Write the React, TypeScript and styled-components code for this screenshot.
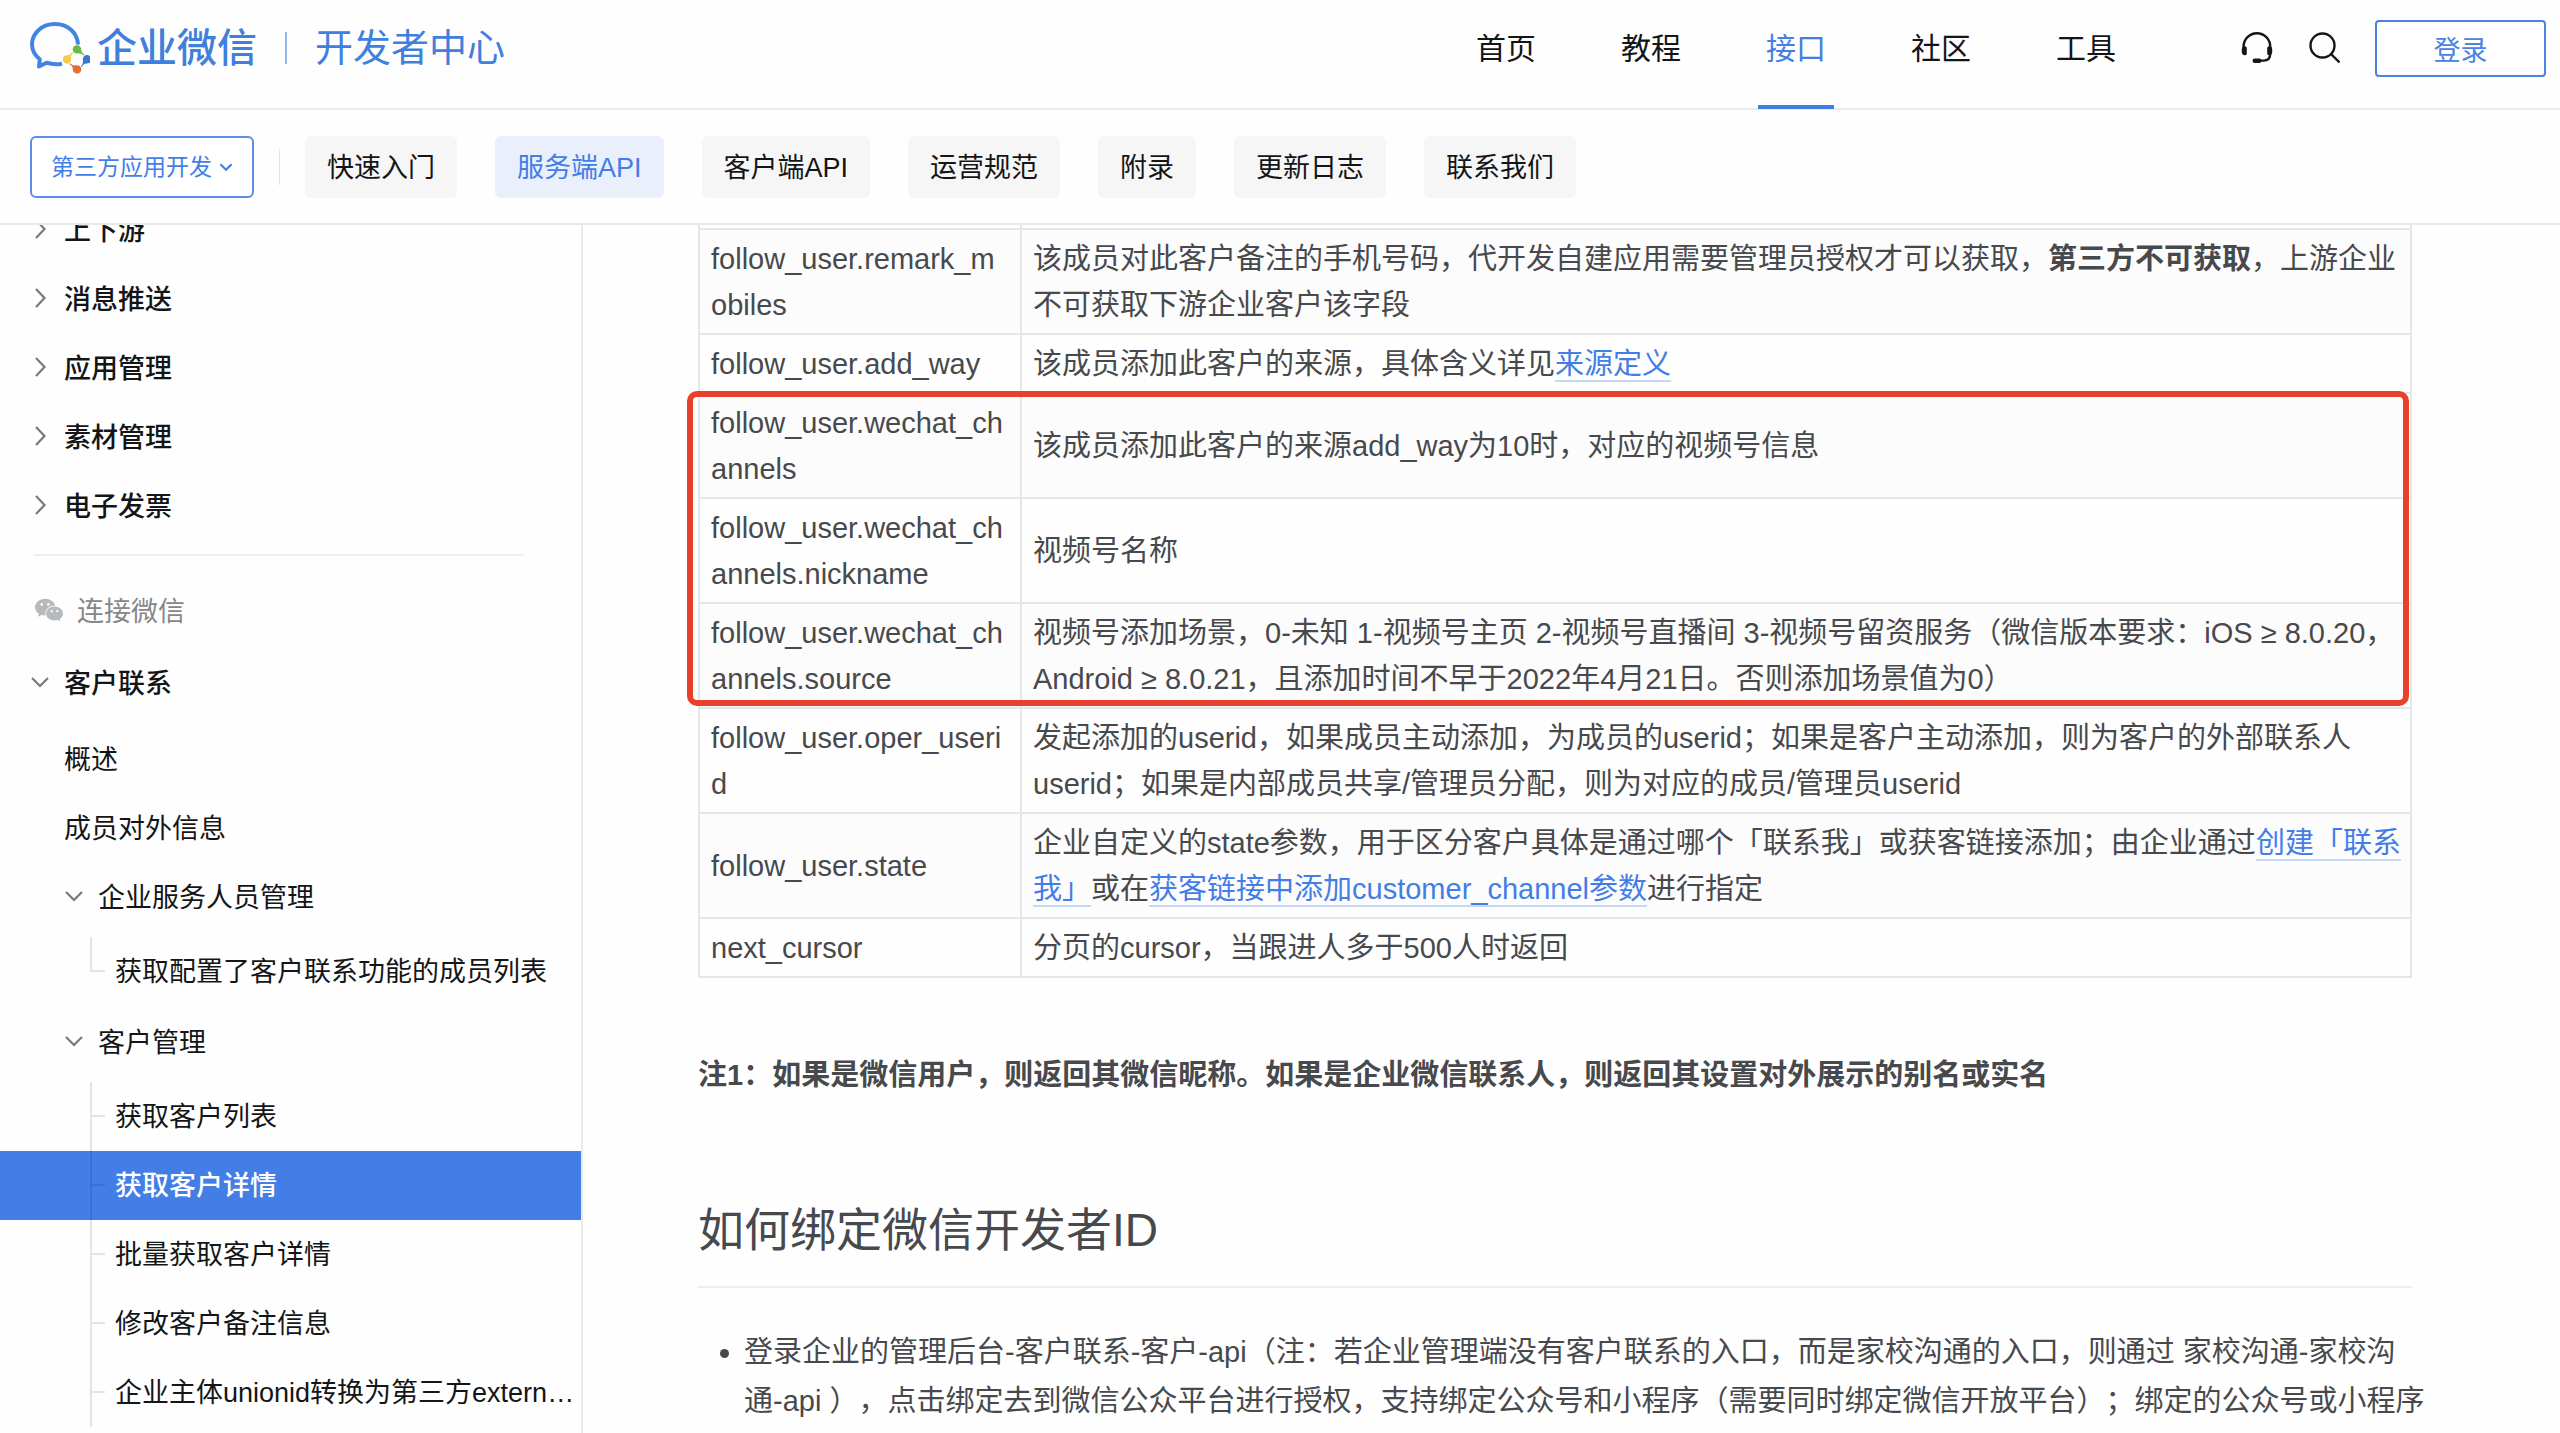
import React, { useState } from "react";
import styled, { createGlobalStyle, css } from "styled-components";
import { AiFillWechat } from "react-icons/ai";

const blue = "#437de6";

const GlobalStyle = createGlobalStyle`
  *, *::before, *::after { box-sizing: border-box; }
  body {
    margin: 0;
    background: #fefefe;
    color: #141516;
    font-family: "Liberation Sans", "Noto Sans CJK SC", sans-serif;
    font-size: 27px;
    text-spacing-trim: space-all;
  }
  button, select { font: inherit; color: inherit; }
  a { color: inherit; text-decoration: none; }
`;

const Page = styled.div`
  display: flex;
  flex-direction: column;
  height: 100vh;
  overflow: hidden;
`;

/* ---------- top bar ---------- */

const TopBar = styled.header`
  display: flex;
  align-items: center;
  flex: none;
  height: 110px;
  padding: 0 14px 12px 30px;
  border-bottom: 2px solid #ececec;
`;

const Brand = styled.a`
  display: flex;
  align-items: center;
  color: #3f80dd;
  line-height: 60px;
`;

const BrandMark = styled.svg`
  width: 60px;
  height: 52px;
`;

const BrandName = styled.span`
  margin-left: 7px;
  font-size: 40px;
  font-weight: 500;
`;

const BrandRule = styled.span`
  width: 2px;
  height: 32px;
  margin: 0 28px;
  background: #8fb6ec;
`;

const BrandSection = styled.span`
  font-size: 38px;
`;

const TopNav = styled.nav`
  display: flex;
  gap: 69px;
  margin-left: auto;
  margin-right: 117px;
`;

const TopLink = styled.a<{ $active?: boolean }>`
  position: relative;
  height: 96px;
  padding: 0 8px;
  font-size: 30px;
  line-height: 98px;
  color: ${(p) => (p.$active ? blue : "inherit")};

  ${(p) =>
    p.$active &&
    css`
      &::after {
        content: "";
        position: absolute;
        left: 0;
        right: 0;
        bottom: -13px;
        height: 4px;
        background: ${blue};
      }
    `}
`;

const Tools = styled.div`
  display: flex;
  align-items: center;
  gap: 35px;
`;

const IconButton = styled.button`
  display: flex;
  padding: 0;
  border: 0;
  background: none;
  cursor: pointer;

  svg {
    width: 32px;
    height: 32px;
  }
`;

const LoginButton = styled.button`
  width: 171px;
  height: 57px;
  padding: 0;
  border: 2px solid #4a83e3;
  border-radius: 4px;
  background: #fff;
  color: #4a83e3;
  font-size: 27px;
  cursor: pointer;
`;

/* ---------- second bar ---------- */

const SubBar = styled.nav`
  display: flex;
  align-items: center;
  flex: none;
  height: 115px;
  padding-left: 30px;
  border-bottom: 2px solid #e8e8e8;
`;

const Picker = styled.label`
  display: grid;
  align-items: center;
  width: 224px;
  height: 62px;

  select,
  svg {
    grid-area: 1 / 1;
  }

  select {
    width: 100%;
    height: 100%;
    padding: 0 19px;
    border: 2px solid #5b8ee6;
    border-radius: 6px;
    background: #fff;
    color: ${blue};
    font-size: 23px;
    appearance: none;
  }

  svg {
    justify-self: end;
    width: 14px;
    height: 14px;
    margin-right: 21px;
    color: ${blue};
    stroke-width: 3;
    pointer-events: none;
  }
`;

const SubRule = styled.span`
  width: 1px;
  height: 36px;
  margin: 0 25px;
  background: #e4e4e4;
`;

const Pills = styled.div`
  display: flex;
  gap: 38px;
`;

const Pill = styled.a<{ $active?: boolean }>`
  height: 62px;
  padding: 0 22px;
  border-radius: 6px;
  line-height: 64px;
  background: ${(p) => (p.$active ? "#eaeffc" : "#f6f6f6")};
  color: ${(p) => (p.$active ? blue : "inherit")};
`;

/* ---------- sidebar ---------- */

const Body = styled.div`
  display: flex;
  flex: 1;
  min-height: 0;
`;

const Sidebar = styled.aside`
  flex: none;
  width: 583px;
  overflow: hidden;
  border-right: 2px solid #ebebeb;
`;

const Tree = styled.ul`
  margin: -31px 0 0;
  padding: 0;
  list-style: none;
`;

const SubTree = styled.ul`
  margin: 0;
  padding: 7px 0 0;
  list-style: none;
`;

const Row = styled.a<{ $level: 1 | 2; $leaf?: boolean }>`
  display: flex;
  align-items: center;
  gap: 14px;
  height: 69px;
  padding-left: ${(p) => (p.$level === 1 && !p.$leaf ? 30 : 64)}px;
  font-weight: ${(p) => (p.$level === 1 && !p.$leaf ? 500 : 400)};

  svg {
    flex: none;
    width: 20px;
    height: 20px;
    color: #77797c;
  }
`;

const Branch = styled.li<{ $active?: boolean; $end?: boolean }>`
  position: relative;

  &::before,
  &::after {
    content: "";
    position: absolute;
    left: 90px;
    background: rgba(0, 0, 0, 0.1);
  }
  &::before {
    top: 0;
    bottom: ${(p) => (p.$end ? "50%" : "0")};
    width: 2px;
  }
  &::after {
    top: 50%;
    left: 92px;
    width: 13px;
    height: 2px;
    margin-top: -2px;
  }

  a {
    display: block;
    height: 69px;
    padding: 0 4px 0 115px;
    overflow: hidden;
    line-height: 71px;
    text-overflow: ellipsis;
    white-space: nowrap;
    color: ${(p) => (p.$active ? "#fff" : "inherit")};
    background: ${(p) => (p.$active ? blue : "transparent")};
    font-weight: ${(p) => (p.$active ? 500 : 400)};
  }
`;

const GroupTitle = styled.li`
  display: flex;
  align-items: center;
  gap: 12px;
  height: 69px;
  margin-bottom: 3px;
  color: #85878a;

  svg {
    width: 32px;
    height: 32px;
    margin-left: 33px;
    color: #b7babd;
  }
`;

const Divider = styled.li`
  height: 2px;
  margin: 15px 57px 19px 34px;
  background: #efefef;
`;

/* ---------- document ---------- */

const Main = styled.main`
  flex: 1;
  min-width: 0;
  padding: 0 148px 0 115px;
  overflow: hidden;
  color: #47494c;
  font-size: 29px;
  line-height: 46px;
`;

const TableWrap = styled.div`
  position: relative;
`;

const FieldTable = styled.table`
  width: 100%;
  border-collapse: collapse;
  table-layout: fixed;

  td {
    padding: 6px 12px 5px 11px;
    border: 2px solid #e3e7ea;
    word-break: break-all;
  }
  td:last-child {
    padding-right: 4px;
  }
  tr:nth-child(even) {
    background: #fcfcfd;
  }
`;

const NameCol = styled.col`
  width: 322px;
`;

const EdgeRow = styled.tr`
  height: 4px;

  && td {
    padding: 0;
    border-top: 0;
  }
`;

const Highlight = styled.div`
  position: absolute;
  top: 166px;
  left: -11px;
  right: 3px;
  height: 315px;
  border: 6px solid #e8402a;
  border-radius: 10px;
  pointer-events: none;
`;

const DocLink = styled.a`
  border-bottom: 2px solid #c6d8f8;
  color: ${blue};
`;

const Note = styled.p`
  margin: 74px 0 0;
  font-weight: 600;
`;

const Heading = styled.h2`
  margin: 100px 0 0;
  padding-bottom: 24px;
  border-bottom: 2px solid #eeefef;
  font-size: 46px;
  font-weight: 400;
  line-height: 64px;
`;

const Steps = styled.ul`
  margin: 40px 0 0;
  padding-left: 46px;
  line-height: 49px;
  white-space: nowrap;
`;

/* ---------- drawings ---------- */

const Node = ({ turn, color }: { turn: number; color: string }) => (
  <path
    d="M47 23.2a4.2 4.2 0 0 1 4.2 4.4c0 2 .9 3.6 3.4 5.2l-.8.8c-1.9-2-3.7-2.4-6-2.1a4.2 4.2 0 1 1-.8-8.3Z"
    transform={`rotate(${turn} 47 37.4)`}
    fill={color}
  />
);

const Logo = () => (
  <BrandMark viewBox="0 0 60 52" aria-hidden="true">
    <path
      d="M48 22.5C47.400 10.500 37.500 2 25 2 12.200 2 2 11 2 22.500c0 6 2.800 10.800 7.800 14.800L9 44.500l7.600-3.800c4.900 1.700 10 2 15.400 1"
      fill="none"
      stroke="#4284e2"
      strokeWidth="4"
      strokeLinejoin="round"
    />
    <Node turn={0} color="#68bb45" />
    <Node turn={90} color="#3977d5" />
    <Node turn={180} color="#e26f31" />
    <Node turn={270} color="#f6cb4c" />
  </BrandMark>
);

const Headset = () => (
  <svg viewBox="0 0 32 32" fill="none" stroke="currentColor" strokeWidth="2.400">
    <path d="M2.600 16v-1.500a13.200 13.200 0 0 1 26.600 0V22c0 4.600-2.600 6.600-6.600 6.600H16" />
    <path d="M3.800 14.200c1.500 0 2 1 2 2v5c0 1.300-.6 2-2 2-2 0-3-1.200-3-3.200v-2.600c0-2 1-3.200 3-3.200Z" fill="currentColor" stroke="none" />
    <path d="M28.200 14.200c2 0 3 1.200 3 3.200V20c0 2-1 3.200-3 3.200-1.400 0-2-.7-2-2v-5c0-1 .5-2 2-2Z" fill="currentColor" stroke="none" />
    <rect x="11.500" y="26.400" width="9" height="4.600" rx="2.300" fill="currentColor" stroke="none" />
  </svg>
);

const Magnifier = () => (
  <svg viewBox="0 0 32 32" fill="none" stroke="currentColor" strokeWidth="2.400">
    <circle cx="14.500" cy="13.500" r="12" />
    <path d="M23 22l8.500 8.500" />
  </svg>
);

const Chevron = ({ down }: { down?: boolean }) => (
  <svg viewBox="0 0 20 20" fill="none" stroke="currentColor" strokeWidth="2.200" aria-hidden="true">
    <path d={down ? "M2 6l8 8 8-8" : "M6 1l8.500 9L6 19"} />
  </svg>
);

/* ---------- data ---------- */

const topLinks = ["首页", "教程", "接口", "社区", "工具"];
const pills = ["快速入门", "服务端API", "客户端API", "运营规范", "附录", "更新日志", "联系我们"];
const closedGroups = ["上下游", "消息推送", "应用管理", "素材管理", "电子发票"];
const customerPages = [
  "获取客户列表",
  "获取客户详情",
  "批量获取客户详情",
  "修改客户备注信息",
  "企业主体unionid转换为第三方external_userid",
];

const fields: { name: string; text: React.ReactNode }[] = [
  {
    name: "follow_user.remark_mobiles",
    text: (
      <>
        该成员对此客户备注的手机号码，代开发自建应用需要管理员授权才可以获取，<strong>第三方不可获取</strong>，上游企业不可获取下游企业客户该字段
      </>
    ),
  },
  {
    name: "follow_user.add_way",
    text: (
      <>
        该成员添加此客户的来源，具体含义详见<DocLink href="#source">来源定义</DocLink>
      </>
    ),
  },
  { name: "follow_user.wechat_channels", text: "该成员添加此客户的来源add_way为10时，对应的视频号信息" },
  { name: "follow_user.wechat_channels.nickname", text: "视频号名称" },
  {
    name: "follow_user.wechat_channels.source",
    text: "视频号添加场景，0-未知 1-视频号主页 2-视频号直播间 3-视频号留资服务（微信版本要求：iOS ≥ 8.0.20，Android ≥ 8.0.21，且添加时间不早于2022年4月21日。否则添加场景值为0）",
  },
  {
    name: "follow_user.oper_userid",
    text: (
      <>
        发起添加的userid，如果成员主动添加，为成员的userid；如果是客户主动添加，则为客户的外部联系人<br />
        userid；如果是内部成员共享/管理员分配，则为对应的成员/管理员userid
      </>
    ),
  },
  {
    name: "follow_user.state",
    text: (
      <>
        企业自定义的state参数，用于区分客户具体是通过哪个「联系我」或获客链接添加；由企业通过
        <DocLink href="#contact-way">创建「联系我」</DocLink>或在
        <DocLink href="#channel">获客链接中添加customer_channel参数</DocLink>进行指定
      </>
    ),
  },
  { name: "next_cursor", text: "分页的cursor，当跟进人多于500人时返回" },
];

export default function App() {
  const [product, setProduct] = useState("第三方应用开发");

  return (
    <Page>
      <GlobalStyle />

      <TopBar>
        <Brand href="#home">
          <Logo />
          <BrandName>企业微信</BrandName>
          <BrandRule />
          <BrandSection>开发者中心</BrandSection>
        </Brand>
        <TopNav>
          {topLinks.map((t) => (
            <TopLink key={t} href={`#${t}`} $active={t === "接口"}>
              {t}
            </TopLink>
          ))}
        </TopNav>
        <Tools>
          <IconButton aria-label="客服">
            <Headset />
          </IconButton>
          <IconButton aria-label="搜索">
            <Magnifier />
          </IconButton>
          <LoginButton>登录</LoginButton>
        </Tools>
      </TopBar>

      <SubBar>
        <Picker>
          <select aria-label="开发类型" value={product} onChange={(e) => setProduct(e.target.value)}>
            <option>第三方应用开发</option>
            <option>企业内部开发</option>
            <option>服务商代开发</option>
          </select>
          <Chevron down />
        </Picker>
        <SubRule />
        <Pills>
          {pills.map((t) => (
            <Pill key={t} href={`#${t}`} $active={t === "服务端API"}>
              {t}
            </Pill>
          ))}
        </Pills>
      </SubBar>

      <Body>
        <Sidebar>
          <Tree>
            {closedGroups.map((t) => (
              <li key={t}>
                <Row href={`#${t}`} $level={1}>
                  <Chevron />
                  {t}
                </Row>
              </li>
            ))}
            <Divider />
            <GroupTitle>
              <AiFillWechat />
              连接微信
            </GroupTitle>
            <li>
              <Row href="#客户联系" $level={1}>
                <Chevron down />
                客户联系
              </Row>
              <SubTree>
                <li>
                  <Row href="#概述" $level={1} $leaf>
                    概述
                  </Row>
                </li>
                <li>
                  <Row href="#成员对外信息" $level={1} $leaf>
                    成员对外信息
                  </Row>
                </li>
                <li>
                  <Row href="#企业服务人员管理" $level={2}>
                    <Chevron down />
                    企业服务人员管理
                  </Row>
                  <SubTree>
                    <Branch $end>
                      <a href="#成员列表">获取配置了客户联系功能的成员列表</a>
                    </Branch>
                  </SubTree>
                </li>
                <li>
                  <Row href="#客户管理" $level={2}>
                    <Chevron down />
                    客户管理
                  </Row>
                  <SubTree>
                    {customerPages.map((t) => (
                      <Branch key={t} $active={t === "获取客户详情"}>
                        <a href={`#${t}`}>{t}</a>
                      </Branch>
                    ))}
                  </SubTree>
                </li>
              </SubTree>
            </li>
          </Tree>
        </Sidebar>

        <Main>
          <TableWrap>
            <FieldTable>
              <colgroup>
                <NameCol />
                <col />
              </colgroup>
              <tbody>
                <EdgeRow>
                  <td />
                  <td />
                </EdgeRow>
                {fields.map((f) => (
                  <tr key={f.name}>
                    <td>{f.name}</td>
                    <td>{f.text}</td>
                  </tr>
                ))}
              </tbody>
            </FieldTable>
            <Highlight />
          </TableWrap>

          <Note>注1：如果是微信用户，则返回其微信昵称。如果是企业微信联系人，则返回其设置对外展示的别名或实名</Note>

          <Heading>如何绑定微信开发者ID</Heading>
          <Steps>
            <li>
              登录企业的管理后台-客户联系-客户-api（注：若企业管理端没有客户联系的入口，而是家校沟通的入口，则通过 家校沟通-家校沟<br />
              通-api ），点击绑定去到微信公众平台进行授权，支持绑定公众号和小程序（需要同时绑定微信开放平台）；绑定的公众号或小程序
            </li>
          </Steps>
        </Main>
      </Body>
    </Page>
  );
}
